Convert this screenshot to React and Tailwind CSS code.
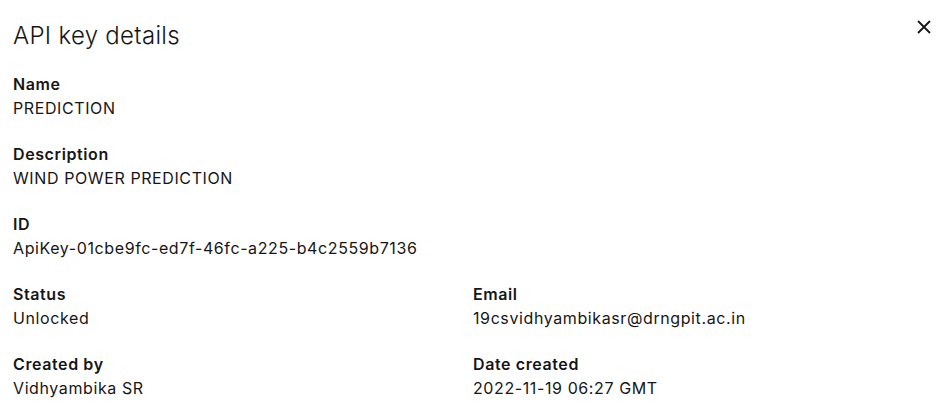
const Field = ({ label, value }) => (
  <div className="flex flex-col tracking-[0.6px]">
    <span className="text-[16px] leading-[24px] font-semibold text-[#161616]">{label}</span>
    <span className="text-[16px] leading-[24px] text-[#161616]">{value}</span>
  </div>
)

const App = () => {
  const fields = [
    ['Name', 'PREDICTION'],
    ['Description', 'WIND POWER PREDICTION'],
    ['ID', 'ApiKey-01cbe9fc-ed7f-46fc-a225-b4c2559b7136'],
  ]

  return (
    <div className="w-[948px] h-[406px] bg-white font-['Inter',sans-serif] text-[#161616] relative overflow-hidden">
      <button className="absolute top-[12px] right-[9px] w-[30px] h-[30px] flex items-center justify-center text-[#161616]">
        <svg width="14" height="14" viewBox="0 0 14 14" fill="none" stroke="currentColor" strokeWidth="1.8">
          <path d="M1 1L13 13M13 1L1 13" />
        </svg>
      </button>

      <div className="pl-[13px] pt-[20px]">
        <h2 className="text-[24px] leading-[32px] font-light tracking-[0.3px]">API key details</h2>

        <div className="mt-[20px] flex flex-col gap-[22px]">
          {fields.map(([l, v]) => (
            <Field key={l} label={l} value={v} />
          ))}
          <div className="grid grid-cols-[460px_1fr] gap-y-[22px]">
            <Field label="Status" value="Unlocked" />
            <Field label="Email" value="19csvidhyambikasr@drngpit.ac.in" />
            <Field label="Created by" value="Vidhyambika SR" />
            <Field label="Date created" value="2022-11-19 06:27 GMT" />
          </div>
        </div>
      </div>
    </div>
  )
}

export default App
